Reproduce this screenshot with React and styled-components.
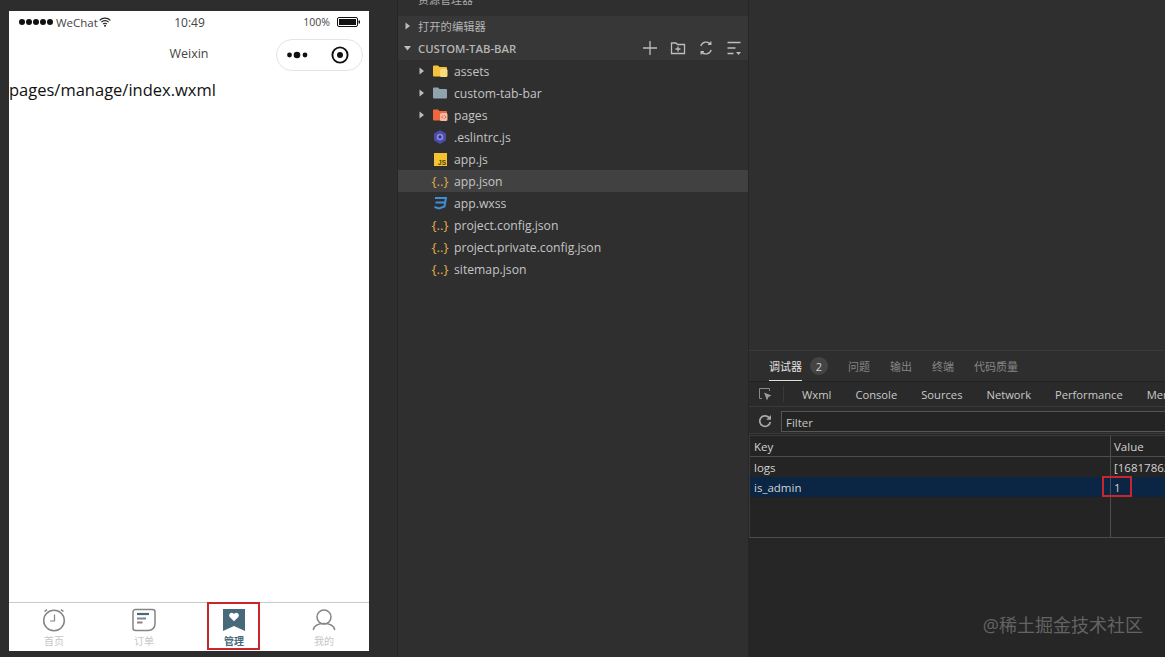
import React from "react";
import styled, { createGlobalStyle } from "styled-components";

const GlobalStyle = createGlobalStyle`
  html, body { margin: 0; padding: 0; background: #2f2f2f; }
  * { box-sizing: border-box; }
  body { font-family: "Open Sans", "Noto Sans CJK SC", sans-serif; }
`;

const CJK = `"Open Sans", "Noto Sans CJK SC", sans-serif`;

const Page = styled.div`
  width: 1165px;
  height: 657px;
  display: flex;
  overflow: hidden;
  position: relative;
  background: #2f2f2f;
`;

/* simulator */
const SimulatorPane = styled.div`
  width: 398px;
  flex: none;
  padding: 11px 0 0 9px;
  background: #2d2d2d;
  border-right: 1px solid #262626;
`;
const Phone = styled.div`
  width: 360px;
  height: 640px;
  background: #fff;
  display: flex;
  flex-direction: column;
`;
const StatusBar = styled.div`
  height: 22px;
  flex: none;
  display: grid;
  grid-template-columns: 1fr 1fr 1fr;
  align-items: center;
  padding: 0 9px 0 10px;
  color: #444;
  font-size: 11.5px;
`;
const StatusLeft = styled.div`
  display: flex;
  align-items: center;
  gap: 3px;
  svg { margin-left: -2px; }
`;
const SignalDots = styled.span`
  display: flex;
  gap: 1px;
  i { width: 6px; height: 6px; border-radius: 50%; background: #111; display: block; }
`;
const StatusTime = styled.div`
  text-align: center;
  font-size: 12px;
`;
const StatusRight = styled.div`
  display: flex;
  justify-content: flex-end;
  align-items: center;
  gap: 7px;
  font-size: 10.5px;
`;
const NavBar = styled.div`
  height: 39px;
  flex: none;
  display: flex;
  align-items: center;
  justify-content: center;
  position: relative;
  color: #444;
  font-size: 12.5px;
  padding-top: 2px;
`;
const Capsule = styled.div`
  position: absolute;
  right: 6px;
  top: 6px;
  width: 87px;
  height: 32px;
  border: 1px solid #e4e4e4;
  border-radius: 16px;
  display: flex;
  align-items: center;
  justify-content: space-between;
  padding: 0 13px 0 9px;
`;
const PageText = styled.div`
  flex: 1;
  color: #111;
  font-size: 16.5px;
  line-height: 20px;
  padding-top: 8px;
`;
const TabBar = styled.div`
  height: 49px;
  flex: none;
  display: grid;
  grid-template-columns: repeat(4, 90px);
  border-top: 1px solid #c9c9c9;
`;
const TabItem = styled.div`
  position: relative;
  display: flex;
  flex-direction: column;
  align-items: center;
  padding-top: 5px;
  font-size: 10px;
  line-height: 13px;
  color: ${(p) => (p.$active ? "#47697a" : "#c6c6c6")};
  font-weight: ${(p) => (p.$active ? 600 : 400)};
  svg { display: block; margin-bottom: 3px; }
`;
const TabHighlight = styled.div`
  position: absolute;
  left: 18px;
  top: -1px;
  width: 53px;
  height: 48px;
  border: 2px solid #c9252d;
`;

/* explorer */
const Explorer = styled.div`
  width: 351px;
  flex: none;
  background: #2f2f2f;
  border-right: 1px solid #262626;
  color: #c4c4c4;
  font-size: 12.2px;
`;
const ExplorerTitle = styled.div`
  height: 16px;
  overflow: hidden;
  padding-left: 20px;
  font-size: 11px;
  line-height: 11px;
  color: #a8a8a8;
  span { transform: translateY(-6px); display: block; }
`;
const SectionHeader = styled.div`
  height: 22px;
  background: #373737;
  display: flex;
  align-items: center;
  padding: 0 0 2px 6px;
  gap: 6px;
  font-size: 11.3px;
  font-weight: ${(p) => (p.$strong ? 600 : 400)};
  color: #b4b4b4;
`;
const SectionActions = styled.div`
  margin-left: auto;
  display: flex;
  gap: 12px;
  padding-right: 6px;
  color: #bdbdbd;
`;
const TreeRow = styled.div`
  height: 22px;
  display: flex;
  align-items: center;
  padding-left: 20px;
  background: ${(p) => (p.$selected ? "#414141" : "transparent")};
`;
const Arrow = styled.span`
  width: 13px;
  flex: none;
  display: flex;
`;
const FileIcon = styled.span`
  width: 18px;
  flex: none;
  display: flex;
  align-items: center;
  justify-content: center;
  margin-right: 5px;
  color: #e2ab4a;
  font-size: 13.5px;
  white-space: nowrap;
`;

/* debugger */
const RightPane = styled.div`
  flex: 1;
  min-width: 0;
  display: flex;
  flex-direction: column;
`;
const EditorArea = styled.div`
  height: 350px;
  flex: none;
  background: #2f2f2f;
`;
const Debugger = styled.div`
  flex: 1;
  background: #262626;
  border-top: 1px solid #3a3a3a;
  position: relative;
  overflow: hidden;
`;
const PanelTabs = styled.div`
  height: 30px;
  background: #2e2e2e;
  display: flex;
  align-items: center;
  padding-left: 20px;
  font-size: 11px;
  color: #8c8c8c;
`;
const PanelTab = styled.div`
  height: 30px;
  display: flex;
  align-items: center;
  margin-right: ${(p) => p.$gap || 20}px;
  color: ${(p) => (p.$active ? "#e2e2e2" : "#858585")};
  border-bottom: ${(p) => (p.$active ? "1px solid #e2e2e2" : "1px solid transparent")};
`;
const Badge = styled.span`
  width: 18px;
  height: 18px;
  border-radius: 50%;
  background: #444;
  color: #d4d4d4;
  display: flex;
  align-items: center;
  justify-content: center;
  font-size: 11px;
  margin: 0 20px 0 -14px;
`;
const ToolBar = styled.div`
  height: 26px;
  background: #2a2a2a;
  border-top: 1px solid #222;
  border-bottom: 1px solid #3a3a3a;
  display: flex;
  align-items: center;
  padding-left: 9px;
  color: #c9c9c9;
  font-size: 11.2px;
  white-space: nowrap;
  svg { flex: none; }
`;
const ToolDivider = styled.span`
  width: 1px;
  height: 16px;
  flex: none;
  background: #3a3a3a;
  margin: 0 18px 0 11px;
`;
const ToolTab = styled.span`
  flex: none;
  margin-right: 24px;
`;
const FilterRow = styled.div`
  height: 27px;
  background: #2a2a2a;
  border-bottom: 1px solid #3a3a3a;
  display: flex;
  align-items: center;
  padding: 2px 0 0 9px;
  gap: 9px;
`;
const FilterBox = styled.div`
  flex: 1;
  height: 21px;
  border: 1px solid #555;
  border-right: none;
  background: #242424;
  color: #c4c4c4;
  font-size: 11.5px;
  line-height: 21px;
  padding-left: 4px;
`;
const Table = styled.div`
  margin-top: 1px;
  height: 103px;
  background: #242424;
  border-top: 1px solid #3a3a3a;
  border-bottom: 1px solid #4d4d4d;
  border-left: 1px solid #3a3a3a;
  display: grid;
  grid-template-columns: 360px 1fr;
  grid-template-rows: 21px 20px 20px 1fr;
  color: #d2d2d2;
  font-size: 11.5px;
`;
const Cell = styled.div`
  position: relative;
  display: flex;
  align-items: center;
  padding-left: ${(p) => (p.$value ? 3 : 4)}px;
  white-space: nowrap;
  overflow: ${(p) => (p.$boxed ? "visible" : "hidden")};
  border-left: ${(p) => (p.$value ? "1px solid #4d4d4d" : "none")};
  border-bottom: ${(p) => (p.$head ? "1px solid #4d4d4d" : "none")};
  background: ${(p) => (p.$selected ? "#0b2545" : "transparent")};
`;
const ValueHighlight = styled.span`
  position: absolute;
  left: -9px;
  top: -1px;
  width: 30px;
  height: 21px;
  border: 2px solid #c9252d;
`;
const Watermark = styled.div`
  position: absolute;
  right: 22px;
  bottom: 20px;
  font-size: 18px;
  line-height: 24px;
  color: #636363;
  font-family: ${CJK};
  white-space: nowrap;
`;

const Wifi = () => (
  <svg width="12" height="10" viewBox="0 0 12 10">
    <path d="M.6 3.4a7.6 7.6 0 0 1 10.8 0M2.4 5.2a5 5 0 0 1 7.2 0M4.2 7a2.5 2.5 0 0 1 3.6 0" fill="none" stroke="#222" strokeWidth="1.2" />
    <circle cx="6" cy="8.8" r="1" fill="#222" />
  </svg>
);
const Battery = () => (
  <svg width="23" height="10" viewBox="0 0 23 10">
    <rect x=".5" y=".5" width="20" height="9" rx="1.5" fill="none" stroke="#111" />
    <rect x="2" y="2" width="17" height="6" fill="#111" />
    <rect x="21.5" y="3.5" width="1.5" height="3" fill="#111" />
  </svg>
);
const MoreDots = () => (
  <svg width="24" height="10" viewBox="0 0 24 10">
    <circle cx="3.5" cy="5" r="2.4" fill="#111" />
    <circle cx="11" cy="5" r="3.3" fill="#111" />
    <circle cx="19" cy="5" r="2.4" fill="#111" />
  </svg>
);
const Target = () => (
  <svg width="18" height="18" viewBox="0 0 18 18">
    <circle cx="9" cy="9" r="7.6" fill="none" stroke="#111" strokeWidth="1.9" />
    <circle cx="9" cy="9" r="3" fill="#111" />
  </svg>
);

const ClockIcon = () => (
  <svg width="26" height="24" viewBox="0 0 26 24" fill="none" stroke="#858585">
    <circle cx="13" cy="12.5" r="10.3" strokeWidth="1.5" />
    <path d="M13.5 6.5v6.5H9" strokeWidth="1.2" />
    <path d="M3.5 3.5 6 1.6M22.5 3.5 20 1.6" strokeWidth="1.5" />
  </svg>
);
const OrderIcon = () => (
  <svg width="26" height="24" viewBox="0 0 26 24" fill="none">
    <path d="M4.5 1.500h17a2.500 2.500 0 0 1 2.500 2.500v12a6.500 6.500 0 0 1-6.500 6.500h-13A2.500 2.500 0 0 1 2 20V4a2.500 2.500 0 0 1 2.500-2.500z" stroke="#858585" strokeWidth="1.5" />
    <path d="M6 6h12" stroke="#47697a" strokeWidth="2.200" />
    <path d="M6 10.500h9M6 14.500h5.500" stroke="#858585" strokeWidth="1.800" />
  </svg>
);
const ManageIcon = () => (
  <svg width="26" height="24" viewBox="0 0 26 24">
    <path d="M2 1h22v22L13 18 2 23z" fill="#47697a" />
    <path d="M13 13.200 8.600 9a2.700 2.700 0 0 1 3.700-3.800l.7.7.7-.7A2.700 2.700 0 0 1 17.400 9z" fill="#fff" />
  </svg>
);
const PersonIcon = () => (
  <svg width="26" height="24" viewBox="0 0 26 24" fill="none" stroke="#858585" strokeWidth="1.500">
    <circle cx="13" cy="9" r="7" />
    <path d="M2.200 22c1-4.500 5-6.500 10.800-6.500s9.800 2 10.800 6.500" />
  </svg>
);

const Caret = ({ open, color = "#bdbdbd" }) => (
  <svg width="8" height="8" viewBox="0 0 8 8">
    <path d={open ? "M0 2h7L3.500 6.500z" : "M1.500 .5 6 4 1.500 7.500z"} fill={color} />
  </svg>
);

const Folder = ({ color, badge, code }) => (
  <svg width="16" height="14" viewBox="0 0 16 14">
    <path d="M1 2.500A1 1 0 0 1 2 1.500h4l1.500 1.500H14a1 1 0 0 1 1 1V11.500a1 1 0 0 1-1 1H2a1 1 0 0 1-1-1z" fill={color} />
    {badge && <rect x="8" y="5" width="7.500" height="8" rx="1.500" fill={badge} />}
    {code && <path d="M11 7.500 9.500 9l1.500 1.500M12.500 7.500 14 9l-1.500 1.500" fill="none" stroke="#e0562f" strokeWidth=".8" />}
  </svg>
);
const EslintIcon = () => (
  <svg width="16" height="16" viewBox="0 0 16 16">
    <path d="M8 1 14 4.500v7L8 15 2 11.500v-7z" fill="#4b4ba8" />
    <circle cx="8" cy="8" r="3.300" fill="#8f8fe0" />
    <circle cx="8" cy="8" r="1.700" fill="#35357e" />
  </svg>
);
const JsIcon = () => (
  <svg width="13" height="13" viewBox="0 0 13 13">
    <rect width="13" height="13" fill="#f5c331" />
    <text x="12" y="11.500" textAnchor="end" fontSize="6.500" fontWeight="700" fill="#4a3c08" fontFamily="Liberation Sans, sans-serif">JS</text>
  </svg>
);
const CssIcon = () => (
  <svg width="14" height="14" viewBox="0 0 14 14" fill="none" stroke="#3d8fd9" strokeWidth="2">
    <path d="M2 2h11l-1.500 8.500L6 12.500 1.500 11M2.500 6.500h9" />
  </svg>
);

const HeaderIcon = ({ children }) => (
  <svg width="16" height="16" viewBox="0 0 16 16" fill="none" stroke="currentColor" strokeWidth="1.300">
    {children}
  </svg>
);

const Inspect = () => (
  <svg width="14" height="14" viewBox="0 0 14 14" fill="none">
    <path d="M11.500 4V1.500h-10v10H4" stroke="#8a8a8a" />
    <path d="M6 5.500 13.500 8.500 10.500 10 9 13.500z" fill="#9a9a9a" />
  </svg>
);
const Reload = () => (
  <svg width="14" height="14" viewBox="0 0 14 14" fill="none">
    <path d="M11.700 4.500A5.300 5.300 0 1 0 12.300 8" stroke="#a8a8a8" strokeWidth="1.700" />
    <path d="M13 1v4.800H8.200z" fill="#a8a8a8" />
  </svg>
);

const tabs = [
  { label: "首页", icon: <ClockIcon /> },
  { label: "订单", icon: <OrderIcon /> },
  { label: "管理", icon: <ManageIcon />, active: true },
  { label: "我的", icon: <PersonIcon /> },
];

const Braces = () => <span>{"{..}"}</span>;

const files = [
  { name: "assets", caret: true, icon: <Folder color="#f5c33b" badge="#f9dd7c" /> },
  { name: "custom-tab-bar", caret: true, icon: <Folder color="#90a4ae" /> },
  { name: "pages", caret: true, icon: <Folder color="#f0663f" badge="#f7b9a4" code /> },
  { name: ".eslintrc.js", icon: <EslintIcon /> },
  { name: "app.js", icon: <JsIcon /> },
  { name: "app.json", icon: <Braces />, selected: true },
  { name: "app.wxss", icon: <CssIcon /> },
  { name: "project.config.json", icon: <Braces /> },
  { name: "project.private.config.json", icon: <Braces /> },
  { name: "sitemap.json", icon: <Braces /> },
];

export default function App() {
  return (
    <Page>
      <GlobalStyle />
      <SimulatorPane>
        <Phone>
          <StatusBar>
            <StatusLeft>
              <SignalDots><i /><i /><i /><i /><i /></SignalDots>
              WeChat
              <Wifi />
            </StatusLeft>
            <StatusTime>10:49</StatusTime>
            <StatusRight>100%<Battery /></StatusRight>
          </StatusBar>
          <NavBar>
            Weixin
            <Capsule><MoreDots /><Target /></Capsule>
          </NavBar>
          <PageText>pages/manage/index.wxml</PageText>
          <TabBar>
            {tabs.map((t) => (
              <TabItem key={t.label} $active={t.active}>
                {t.icon}
                {t.label}
                {t.active && <TabHighlight />}
              </TabItem>
            ))}
          </TabBar>
        </Phone>
      </SimulatorPane>

      <Explorer>
        <ExplorerTitle><span>资源管理器</span></ExplorerTitle>
        <SectionHeader><Caret />打开的编辑器</SectionHeader>
        <SectionHeader $strong>
          <Caret open />CUSTOM-TAB-BAR
          <SectionActions>
            <HeaderIcon><path d="M8 1v14M1 8h14" /></HeaderIcon>
            <HeaderIcon><path d="M1.500 3h4.500l1.500 1.500h7v9h-13zM8 6.500v5M5.500 9h5" /></HeaderIcon>
            <HeaderIcon><path d="M2.800 6A5.700 5.700 0 0 1 12.500 4M13.200 10A5.700 5.700 0 0 1 3.500 12M12.800 1.500V4.300H10M3.200 14.500V11.700H6" /></HeaderIcon>
            <HeaderIcon><path d="M1.500 2.500h13M1.500 8h8M1.500 13.500h6" /><path d="M10 12h5l-2.500 3z" fill="currentColor" stroke="none" /></HeaderIcon>
          </SectionActions>
        </SectionHeader>
        {files.map((f) => (
          <TreeRow key={f.name} $selected={f.selected}>
            <Arrow>{f.caret && <Caret />}</Arrow>
            <FileIcon>{f.icon}</FileIcon>
            {f.name}
          </TreeRow>
        ))}
      </Explorer>

      <RightPane>
        <EditorArea />
        <Debugger>
          <PanelTabs>
            <PanelTab $active $gap={22}>调试器</PanelTab>
            <Badge>2</Badge>
            <PanelTab>问题</PanelTab>
            <PanelTab>输出</PanelTab>
            <PanelTab>终端</PanelTab>
            <PanelTab>代码质量</PanelTab>
          </PanelTabs>
          <ToolBar>
            <Inspect />
            <ToolDivider />
            <ToolTab>Wxml</ToolTab>
            <ToolTab>Console</ToolTab>
            <ToolTab>Sources</ToolTab>
            <ToolTab>Network</ToolTab>
            <ToolTab>Performance</ToolTab>
            <ToolTab>Memory</ToolTab>
          </ToolBar>
          <FilterRow>
            <Reload />
            <FilterBox>Filter</FilterBox>
          </FilterRow>
          <Table>
            <Cell $head>Key</Cell>
            <Cell $head $value>Value</Cell>
            <Cell>logs</Cell>
            <Cell $value>[1681786200000]</Cell>
            <Cell $selected>is_admin</Cell>
            <Cell $selected $value $boxed>1<ValueHighlight /></Cell>
            <Cell />
            <Cell $value />
          </Table>
          <Watermark>@稀土掘金技术社区</Watermark>
        </Debugger>
      </RightPane>
    </Page>
  );
}
